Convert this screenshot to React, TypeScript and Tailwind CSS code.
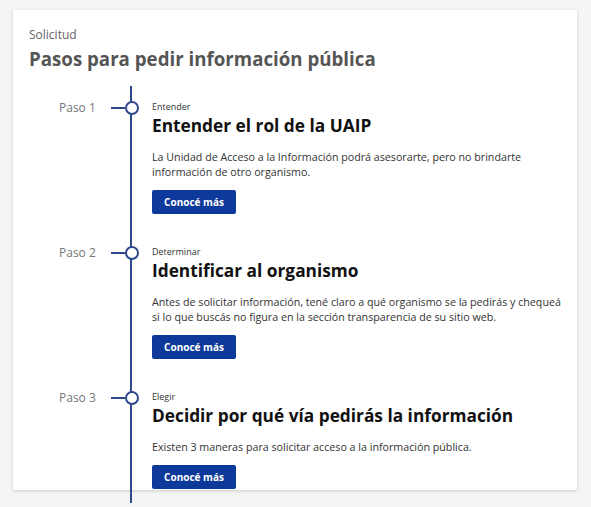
import React from "react";

const steps = [
  {
    paso: "Paso 1",
    label: "Entender",
    title: "Entender el rol de la UAIP",
    text: "La Unidad de Acceso a la Información podrá asesorarte, pero no brindarte información de otro organismo.",
  },
  {
    paso: "Paso 2",
    label: "Determinar",
    title: "Identificar al organismo",
    text: "Antes de solicitar información, tené claro a qué organismo se la pedirás y chequeá si lo que buscás no figura en la sección transparencia de su sitio web.",
  },
  {
    paso: "Paso 3",
    label: "Elegir",
    title: "Decidir por qué vía pedirás la información",
    text: "Existen 3 maneras para solicitar acceso a la información pública.",
  },
];

export default function App() {
  return (
    <div
      className="min-h-[507px] w-[591px] bg-[#f5f5f5] pt-[10px] pl-[13px]"
      style={{ fontFamily: '"Open Sans", "Liberation Sans", sans-serif' }}
    >
      <div className="relative h-[480px] w-[564px] bg-white pl-[16px] pr-[12px] pt-[16px] shadow-[0_1px_3px_rgba(0,0,0,0.18)]">
        <div className="text-[12px] leading-[18px] text-[#666]">Solicitud</div>
        <h1 className="mt-[1px] text-[18.7px] font-bold leading-[27px] text-[#555]">
          Pasos para pedir información pública
        </h1>
        <div className="relative mt-[14px] pt-[14px]">
          <div className="absolute left-[101px] top-0 h-[417px] w-[2px] bg-[#2f4a8c]" />
          {steps.map((s, i) => (
            <div key={i} className={"flex " + (i < 2 ? "h-[145px]" : "")}>
              <div className="flex h-[16px] w-[82px] shrink-0 items-center text-[12px] text-[#777]">
                <span className="pl-[30px]">{s.paso}</span>
              </div>
              <div className="relative flex h-[16px] w-[41px] shrink-0 items-center">
                <div className="h-[2px] w-[14px] bg-[#2f4a8c]" />
                <div className="h-[14px] w-[14px] rounded-full border-2 border-[#2f4a8c] bg-white" />
              </div>
              <div className="flex-1">
                <div className="text-[9px] leading-[14px] text-[#333]">{s.label}</div>
                <div className="text-[17.3px] font-bold leading-[24px] text-[#111]">
                  {s.title}
                </div>
                <p className="mt-[12px] text-[10.7px] leading-[15px] text-[#333]">{s.text}</p>
                <button className="mt-[10px] flex h-[24px] w-[84px] items-center justify-center rounded-[2px] bg-[#0d3a9a] text-[10px] font-bold text-white">
                  Conocé más
                </button>
              </div>
            </div>
          ))}
        </div>
      </div>
    </div>
  );
}
